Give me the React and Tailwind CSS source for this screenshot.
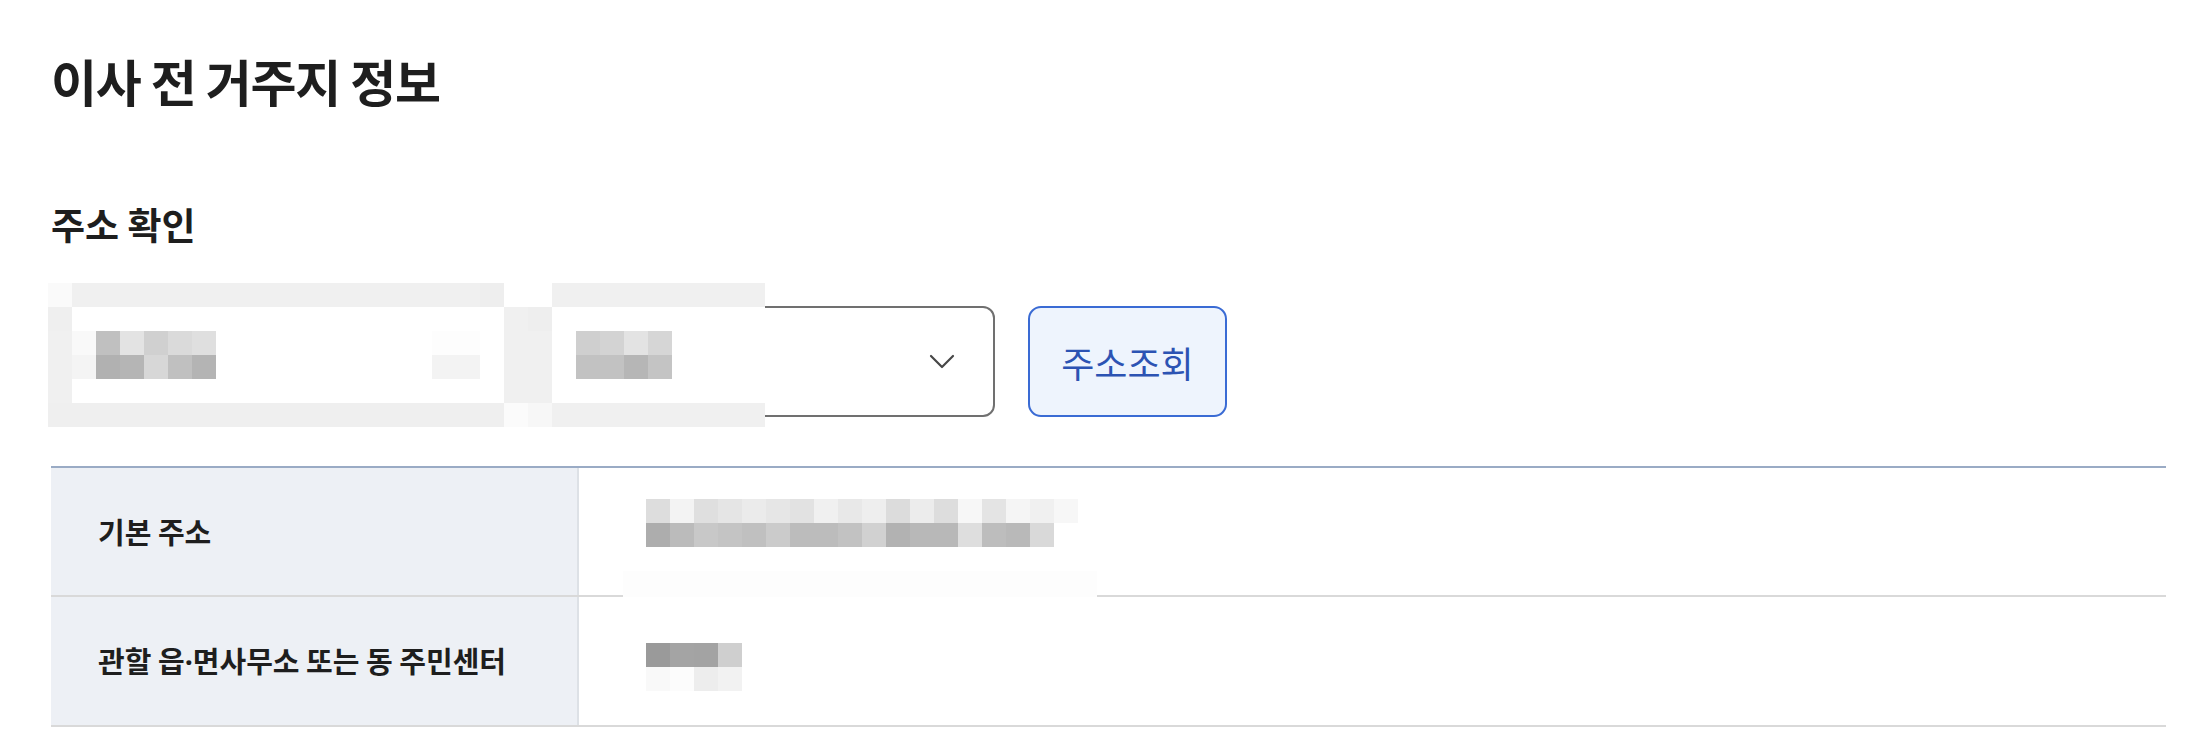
import React from "react";

// 주소 입력 영역을 덮고 있는 모자이크(24px 타일)
const inputMosaic = [
  [
    ["w-[24px]", "bg-[#fafafa]"],
    ["w-[408px]", "bg-[#f0f0f0]"],
    ["w-[24px]", "bg-[#eeeeee]"],
    ["w-[48px]", "bg-white"],
    ["w-[213px]", "bg-[#f0f0f0]"],
  ],
  [
    ["w-[24px]", "bg-[#efefef]"],
    ["w-[432px]", "bg-white"],
    ["w-[24px]", "bg-[#f0f0f0]"],
    ["w-[24px]", "bg-[#eeeeee]"],
    ["w-[213px]", "bg-white"],
  ],
  [
    ["w-[24px]", "bg-[#f0f0f0]"],
    ["w-[24px]", "bg-[#f9f9f9]"],
    ["w-[24px]", "bg-[#c0c0c0]"],
    ["w-[24px]", "bg-[#e3e3e3]"],
    ["w-[24px]", "bg-[#d0d0d0]"],
    ["w-[24px]", "bg-[#dadada]"],
    ["w-[24px]", "bg-[#dfdfdf]"],
    ["w-[216px]", "bg-white"],
    ["w-[48px]", "bg-[#fdfdfd]"],
    ["w-[24px]", "bg-white"],
    ["w-[48px]", "bg-[#f0f0f0]"],
    ["w-[24px]", "bg-white"],
    ["w-[24px]", "bg-[#cfcfcf]"],
    ["w-[24px]", "bg-[#d3d3d3]"],
    ["w-[24px]", "bg-[#e3e3e3]"],
    ["w-[24px]", "bg-[#d6d6d6]"],
    ["w-[93px]", "bg-white"],
  ],
  [
    ["w-[24px]", "bg-[#f0f0f0]"],
    ["w-[24px]", "bg-[#f4f4f4]"],
    ["w-[24px]", "bg-[#b1b1b1]"],
    ["w-[24px]", "bg-[#b5b5b5]"],
    ["w-[24px]", "bg-[#d7d7d7]"],
    ["w-[24px]", "bg-[#c0c0c0]"],
    ["w-[24px]", "bg-[#b4b4b4]"],
    ["w-[216px]", "bg-white"],
    ["w-[48px]", "bg-[#f3f3f3]"],
    ["w-[24px]", "bg-white"],
    ["w-[48px]", "bg-[#f0f0f0]"],
    ["w-[24px]", "bg-white"],
    ["w-[24px]", "bg-[#c2c2c2]"],
    ["w-[24px]", "bg-[#c2c2c2]"],
    ["w-[24px]", "bg-[#b6b6b6]"],
    ["w-[24px]", "bg-[#c4c4c4]"],
    ["w-[93px]", "bg-white"],
  ],
  [
    ["w-[24px]", "bg-[#f0f0f0]"],
    ["w-[432px]", "bg-white"],
    ["w-[48px]", "bg-[#f0f0f0]"],
    ["w-[213px]", "bg-white"],
  ],
  [
    ["w-[456px]", "bg-[#efefef]"],
    ["w-[24px]", "bg-[#fbfbfb]"],
    ["w-[24px]", "bg-[#f7f7f7]"],
    ["w-[213px]", "bg-[#f0f0f0]"],
  ],
];

const addressMosaic = [
  ["bg-[#dddddd]", "bg-[#f3f3f3]", "bg-[#dfdfdf]", "bg-[#e5e5e5]", "bg-[#ebebeb]", "bg-[#e6e6e6]", "bg-[#e2e2e2]", "bg-[#f0f0f0]", "bg-[#e8e8e8]", "bg-[#eeeeee]", "bg-[#dcdcdc]", "bg-[#ececec]", "bg-[#dddddd]", "bg-[#f7f7f7]", "bg-[#e4e4e4]", "bg-[#f5f5f5]", "bg-[#f0f0f0]", "bg-[#f7f7f7]"],
  ["bg-[#adadad]", "bg-[#bbbbbb]", "bg-[#c8c8c8]", "bg-[#c4c4c4]", "bg-[#c0c0c0]", "bg-[#cbcbcb]", "bg-[#bcbcbc]", "bg-[#bcbcbc]", "bg-[#c2c2c2]", "bg-[#d1d1d1]", "bg-[#b2b2b2]", "bg-[#b8b8b8]", "bg-[#b8b8b8]", "bg-[#dedede]", "bg-[#bdbdbd]", "bg-[#b9b9b9]", "bg-[#d9d9d9]"],
];

const centerMosaic = [
  ["bg-[#9a9a9a]", "bg-[#a4a4a4]", "bg-[#a3a3a3]", "bg-[#cfcfcf]"],
  ["bg-[#f9f9f9]", "bg-[#fcfcfc]", "bg-[#ededed]", "bg-[#f2f2f2]"],
];

function TileRows({ rows }) {
  return (
    <div className="flex flex-col">
      {rows.map((row, i) => (
        <div key={i} className="flex h-[24px]">
          {row.map((c, j) => (
            <div key={j} className={`h-[24px] w-[24px] ${c}`} />
          ))}
        </div>
      ))}
    </div>
  );
}

function Chevron() {
  return (
    <svg width="26" height="15" viewBox="0 0 26 15" fill="none">
      <path d="M2 2 L13 13 L24 2" stroke="#474747" strokeWidth="2.2" strokeLinecap="round" strokeLinejoin="round" />
    </svg>
  );
}

export default function App() {
  return (
    <div className="min-h-screen bg-white pl-[51px] pr-[32px] pt-[55px] font-['Noto_Sans_CJK_KR','Noto_Sans',sans-serif] text-[#1e1e1e]">
      <h1 className="text-[50px] font-bold leading-none tracking-[-1.2px]">이사 전 거주지 정보</h1>

      <h2 className="mt-[101px] text-[37px] font-bold leading-none">주소 확인</h2>

      <div className="relative mt-[63px] flex h-[111px]">
        <input
          className="h-full w-[454px] rounded-[12px] border-2 border-[#707070] px-6 text-[30px]"
          readOnly
        />
        <div className="ml-[25px] flex h-full w-[465px] items-center justify-end rounded-[12px] border-2 border-[#707070] pr-[38px]">
          <Chevron />
        </div>
        <button className="ml-[33px] flex h-full w-[199px] items-center justify-center rounded-[13px] border-2 border-[#3a6bd4] bg-[#eef4fd] text-[36px] leading-none text-[#2c53b3]">
          주소조회
        </button>

        {/* 모자이크 처리된 입력값 */}
        <div className="absolute left-[-3px] top-[-23px] flex flex-col">
          {inputMosaic.map((row, i) => (
            <div key={i} className="flex h-[24px]">
              {row.map(([w, bg], j) => (
                <div key={j} className={`h-[24px] ${w} ${bg}`} />
              ))}
            </div>
          ))}
        </div>
      </div>

      <div className="mt-[49px] border-t-2 border-[#9aabc5]">
        <div className="relative flex h-[129px] border-b-2 border-[#d9d9d9]">
          <div className="flex w-[528px] items-center border-r-2 border-[#dde1e6] bg-[#edf0f5] pl-[47px] text-[29px] font-bold">
            기본 주소
          </div>
          <div className="flex-1 pl-[67px] pt-[31px]">
            <TileRows rows={addressMosaic} />
          </div>
          <div className="absolute bottom-[-2px] left-[572px] h-[26px] w-[474px] bg-[#fdfdfd]" />
        </div>
        <div className="flex h-[130px] border-b-2 border-[#d9d9d9]">
          <div className="flex w-[528px] items-center border-r-2 border-[#dde1e6] bg-[#edf0f5] pl-[47px] text-[29px] font-bold">
            <span>
              관할 읍<span className="font-['Noto_Sans',sans-serif]">·</span>면사무소 또는 동 주민센터
            </span>
          </div>
          <div className="flex-1 pl-[67px] pt-[46px]">
            <TileRows rows={centerMosaic} />
          </div>
        </div>
      </div>
    </div>
  );
}
